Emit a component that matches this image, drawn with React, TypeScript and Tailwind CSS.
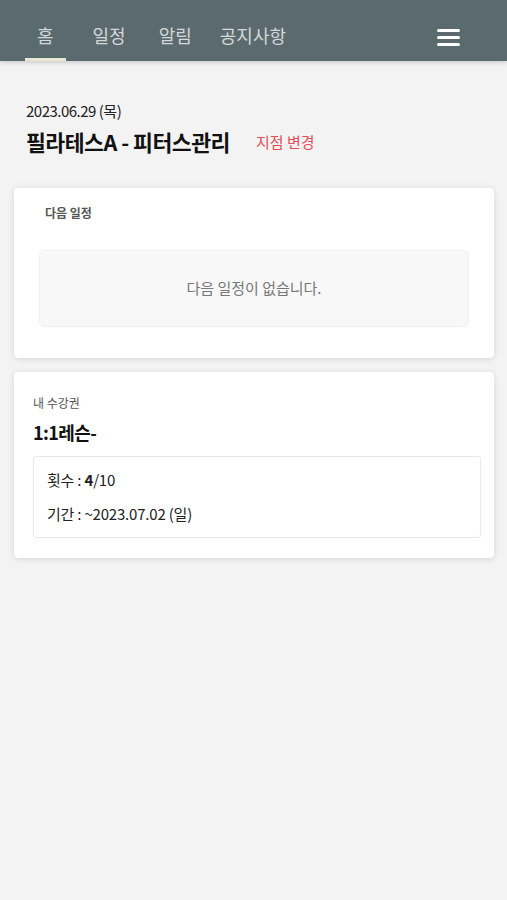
import React from "react";

const font = { fontFamily: '"Noto Sans CJK KR", "Noto Sans", sans-serif' };

export default function App() {
  return (
    <div className="min-h-[900px] w-full bg-[#f4f3f3]" style={font}>
      <header className="h-[61px] bg-[#5b6a6e] flex items-stretch justify-between pl-[25px] pr-[47px] shadow-[0_2px_4px_rgba(0,0,0,0.15)] relative z-10">
        <nav className="flex">
          <div className="px-3 flex items-center pt-[12px] text-[18px] text-[#d3d7d8] border-b-[3px] border-[#ece6d6]">홈</div>
          <div className="ml-[27px] flex items-center pt-[12px] text-[18px] text-[#d3d7d8] border-b-[3px] border-transparent">일정</div>
          <div className="ml-[33px] flex items-center pt-[12px] text-[18px] text-[#d3d7d8] border-b-[3px] border-transparent">알림</div>
          <div className="ml-[28px] flex items-center pt-[12px] text-[18px] text-[#d3d7d8] border-b-[3px] border-transparent">공지사항</div>
        </nav>
        <div className="flex flex-col gap-[4px] justify-center pt-[14px]">
          <span className="block w-[23px] h-[3px] bg-white rounded-sm" />
          <span className="block w-[23px] h-[3px] bg-white rounded-sm" />
          <span className="block w-[23px] h-[3px] bg-white rounded-sm" />
        </div>
      </header>

      <section className="px-[26px] pt-[38px]">
        <div className="text-[15px] text-[#222] leading-[24px] tracking-[-0.5px]">2023.06.29 (목)</div>
        <div className="flex items-center mt-[4px]">
          <h1 className="text-[21.6px] font-bold text-[#111] leading-[30px] tracking-[-0.5px]">필라테스A - 피터스관리</h1>
          <span className="ml-[26px] text-[15px] text-[#e84d57]">지점 변경</span>
        </div>
      </section>

      <main className="px-[14px] pt-[31px] flex flex-col gap-[14px] pr-[13px]">
        <div className="bg-white rounded-[4px] shadow-[0_1px_6px_rgba(0,0,0,0.12)] pt-[16px] pb-[31px] px-[25px]">
          <div className="pl-[6px] text-[12px] font-bold text-[#555] leading-[18px]">다음 일정</div>
          <div className="mt-[28px] h-[77px] rounded-[6px] bg-[#f8f8f8] border border-[#efefef] flex items-center justify-center text-[15px] text-[#777]">
            다음 일정이 없습니다.
          </div>
        </div>

        <div className="bg-white rounded-[4px] shadow-[0_1px_6px_rgba(0,0,0,0.12)] pt-[22px] pb-[20px] px-[19px] pr-[13px]">
          <div className="text-[12px] text-[#555] leading-[18px]">내 수강권</div>
          <div className="text-[18px] font-bold text-[#111] leading-[28px] mt-[6px] tracking-[-0.6px]">1:1레슨-</div>
          <div className="mt-[10px] border border-[#e8e8e8] rounded-[3px] px-[13px] pt-[11px] pb-[11px] text-[15px] text-[#222] leading-[24px] flex flex-col gap-[10px] tracking-[-0.2px]">
            <div>
              횟수 : <span className="font-bold">4</span>/10
            </div>
            <div>기간 : ~2023.07.02 (일)</div>
          </div>
        </div>
      </main>
    </div>
  );
}
